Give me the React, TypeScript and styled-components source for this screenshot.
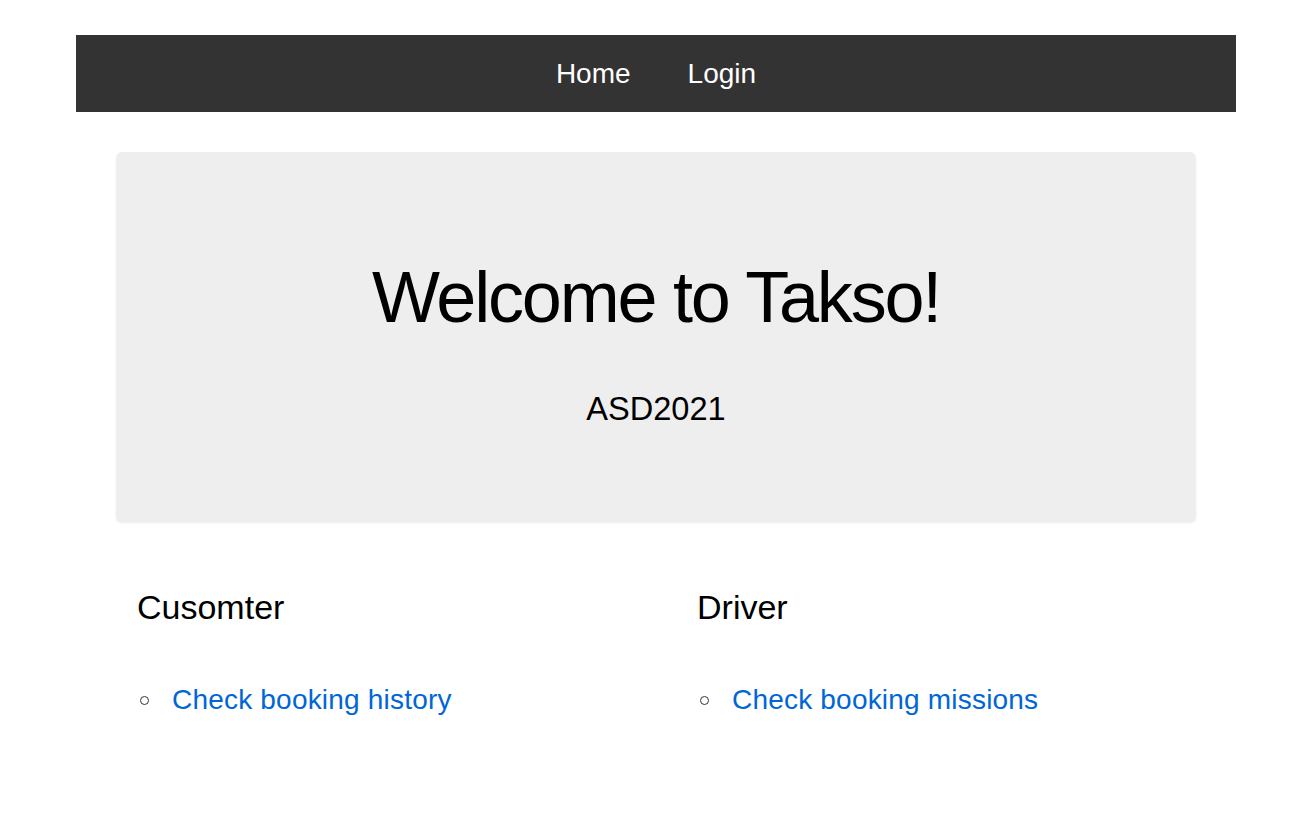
import React from "react";
import styled, { createGlobalStyle } from "styled-components";

const Global = createGlobalStyle`
  html, body { margin: 0; padding: 0; background: #fff; }
  body { font-family: "Liberation Sans", Arial, sans-serif; color: #000; }
`;

const Page = styled.div`
  width: 1160px;
  padding: 35px 0 0 76px;
`;

const NavBar = styled.nav`
  height: 77px;
  background: #333333;
  display: flex;
  align-items: center;
  justify-content: center;
  gap: 57px;
`;

const NavLink = styled.a`
  color: #fff;
  font-size: 28px;
  line-height: 28px;
  text-decoration: none;
`;

const Hero = styled.section`
  margin: 40px 40px 0;
  padding: 109px 0 96px;
  background: #eeeeee;
  border-radius: 6px;
  box-shadow: 0 2px 2px rgba(0, 0, 0, 0.08);
  display: flex;
  flex-direction: column;
  align-items: center;
  gap: 60px;
`;

const Title = styled.h1`
  margin: 0;
  font-size: 72px;
  line-height: 72px;
  font-weight: 400;
  letter-spacing: -2.2px;
`;

const Subtitle = styled.p`
  margin: 0;
  font-size: 32.6px;
  line-height: 32px;
`;

const Columns = styled.div`
  margin: 69px 40px 0 61px;
  display: grid;
  grid-template-columns: 560px 1fr;
`;

const Column = styled.div`
  display: flex;
  flex-direction: column;
  gap: 60px;
`;

const Heading = styled.h3`
  margin: 0;
  font-size: 34px;
  line-height: 34px;
  font-weight: 400;
`;

const List = styled.ul`
  margin: 0;
  padding: 0;
  list-style: none;
`;

const Item = styled.li`
  display: flex;
  align-items: center;
  font-size: 28px;
  line-height: normal;
  &::before {
    content: "";
    width: 7px;
    height: 7px;
    border: 1px solid #333;
    border-radius: 50%;
    margin: 0 23px 0 3px;
    flex: none;
  }
`;

const Link = styled.a`
  color: #0066d6;
  text-decoration: none;
  letter-spacing: 0.2px;
`;

export default function App() {
  return (
    <>
      <Global />
      <Page>
        <NavBar>
          <NavLink href="#">Home</NavLink>
          <NavLink href="#">Login</NavLink>
        </NavBar>
        <Hero>
          <Title>Welcome to Takso!</Title>
          <Subtitle>ASD2021</Subtitle>
        </Hero>
        <Columns>
          <Column>
            <Heading>Cusomter</Heading>
            <List>
              <Item>
                <Link href="#">Check booking history</Link>
              </Item>
            </List>
          </Column>
          <Column>
            <Heading>Driver</Heading>
            <List>
              <Item>
                <Link href="#">Check booking missions</Link>
              </Item>
            </List>
          </Column>
        </Columns>
      </Page>
    </>
  );
}
